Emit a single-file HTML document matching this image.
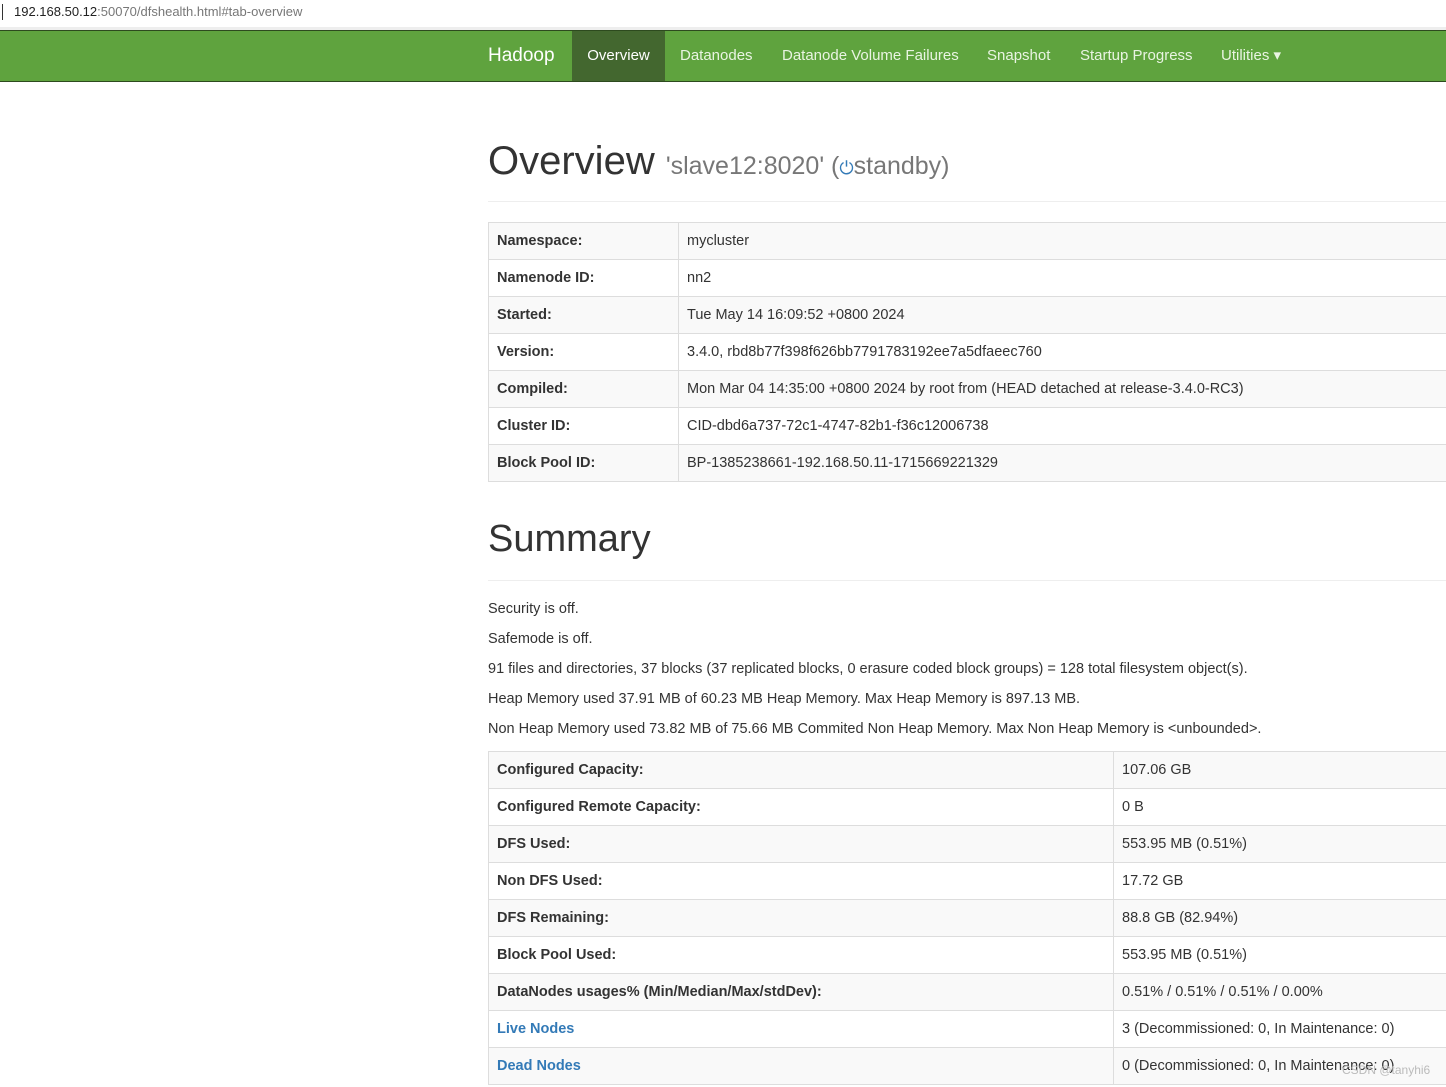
<!DOCTYPE html>
<html><head><style>
body{margin:0;width:1446px;height:1087px;overflow:hidden;background:#fff;font-family:"Liberation Sans",sans-serif;color:#333;font-size:14.5px}
.addr{height:27px;border-bottom:3px solid #eee;font-size:13px;line-height:24px;padding-left:14px;color:#777;position:relative}
.addr:before{content:"";position:absolute;left:2px;top:4px;width:1px;height:16px;background:#333}
.addr b{font-weight:normal;color:#222}
.nav{position:absolute;top:30px;left:0;width:1446px;height:50px;background:#5fa33e;border-top:1px solid #2d4a1e;border-bottom:1px solid #2d4a1e}
.nav a{position:absolute;top:0;height:50px;line-height:50px;color:#e9f4e2;font-size:15px;text-decoration:none}
.nav .brand{left:488px;font-size:19px;color:#fff}
.nav .act{left:572px;width:93px;background:#43672f;text-align:center;color:#fff}
h1{position:absolute;left:488px;margin:0;font-weight:normal;color:#333}
h1 small{font-size:25px;color:#777}
.hr{position:absolute;left:488px;right:0;height:1px;background:#eee}
table{position:absolute;left:488px;width:970px;border-collapse:collapse}
td{border:1px solid #ddd;height:36px;padding:0 8px;font-size:14.5px}
tr:nth-child(odd) td{background:#f9f9f9}
td:first-child{font-weight:bold}
.p{position:absolute;left:488px;font-size:14.5px}
a.l{color:#337ab7;text-decoration:none}
</style></head><body>
<div class="addr"><b>192.168.50.12</b>:50070/dfshealth.html#tab-overview</div>
<div class="nav"><a class="brand">Hadoop</a><a class="act">Overview</a><a style="left:680px">Datanodes</a><a style="left:782px">Datanode Volume Failures</a><a style="left:987px">Snapshot</a><a style="left:1080px">Startup Progress</a><a style="left:1221px">Utilities ▾</a></div>
<h1 style="top:139px;font-size:40px">Overview <small>'slave12:8020' (<span style="color:#337ab7;font-size:18px">⏻</span>standby)</small></h1>
<div class="hr" style="top:201px"></div>
<table style="top:222px;width:960px">
<tr><td style="width:173px">Namespace:</td><td>mycluster</td></tr>
<tr><td>Namenode ID:</td><td>nn2</td></tr>
<tr><td>Started:</td><td>Tue May 14 16:09:52 +0800 2024</td></tr>
<tr><td>Version:</td><td>3.4.0, rbd8b77f398f626bb7791783192ee7a5dfaeec760</td></tr>
<tr><td>Compiled:</td><td>Mon Mar 04 14:35:00 +0800 2024 by root from (HEAD detached at release-3.4.0-RC3)</td></tr>
<tr><td>Cluster ID:</td><td>CID-dbd6a737-72c1-4747-82b1-f36c12006738</td></tr>
<tr><td>Block Pool ID:</td><td>BP-1385238661-192.168.50.11-1715669221329</td></tr>
</table>
<h1 style="top:518px;font-size:38px">Summary</h1>
<div class="hr" style="top:580px"></div>
<div class="p" style="top:601px">Security is off.</div>
<div class="p" style="top:631px">Safemode is off.</div>
<div class="p" style="top:661px">91 files and directories, 37 blocks (37 replicated blocks, 0 erasure coded block groups) = 128 total filesystem object(s).</div>
<div class="p" style="top:691px">Heap Memory used 37.91 MB of 60.23 MB Heap Memory. Max Heap Memory is 897.13 MB.</div>
<div class="p" style="top:721px">Non Heap Memory used 73.82 MB of 75.66 MB Commited Non Heap Memory. Max Non Heap Memory is &lt;unbounded&gt;.</div>
<table style="top:751px">
<tr><td style="width:608px">Configured Capacity:</td><td>107.06 GB</td></tr>
<tr><td>Configured Remote Capacity:</td><td>0 B</td></tr>
<tr><td>DFS Used:</td><td>553.95 MB (0.51%)</td></tr>
<tr><td>Non DFS Used:</td><td>17.72 GB</td></tr>
<tr><td>DFS Remaining:</td><td>88.8 GB (82.94%)</td></tr>
<tr><td>Block Pool Used:</td><td>553.95 MB (0.51%)</td></tr>
<tr><td>DataNodes usages% (Min/Median/Max/stdDev):</td><td>0.51% / 0.51% / 0.51% / 0.00%</td></tr>
<tr><td><a class="l">Live Nodes</a></td><td>3 (Decommissioned: 0, In Maintenance: 0)</td></tr>
<tr><td><a class="l">Dead Nodes</a></td><td>0 (Decommissioned: 0, In Maintenance: 0)</td></tr>
</table>
<div style="position:absolute;left:1342px;top:1063px;font-size:12px;color:#bbb">CSDN @tanyhi6</div>
</body></html>
